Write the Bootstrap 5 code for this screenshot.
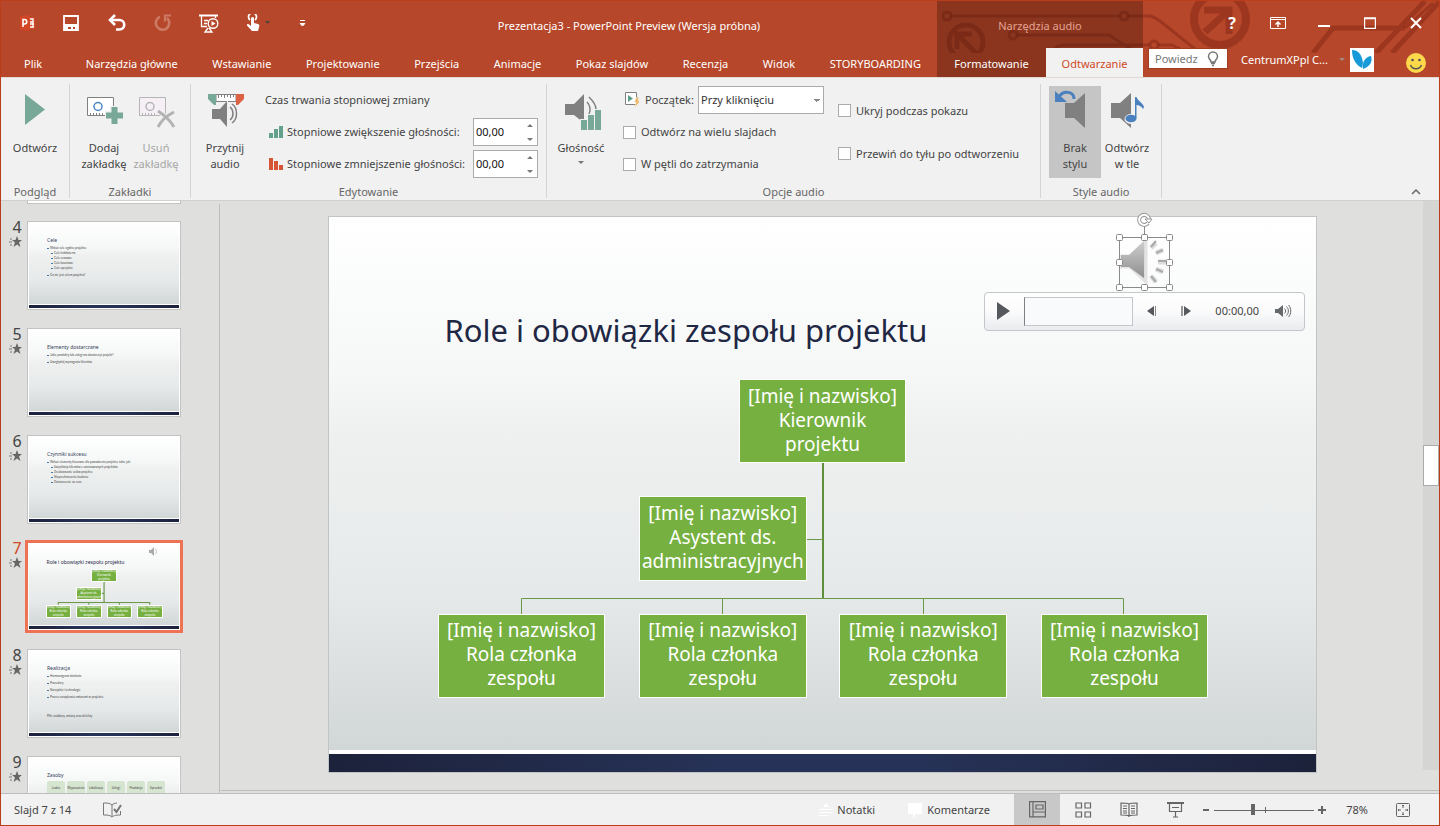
<!DOCTYPE html>
<html lang="pl">
<head>
<meta charset="utf-8">
<meta name="viewport" content="width=device-width, initial-scale=1">
<title>Prezentacja3 - PowerPoint Preview</title>
<link href="https://cdn.jsdelivr.net/npm/bootstrap@5.3.0/dist/css/bootstrap.min.css" rel="stylesheet">
<script src="https://cdn.jsdelivr.net/npm/bootstrap@5.3.0/dist/js/bootstrap.bundle.min.js"></script>
<style>
  body { font-family: "Noto Sans", "Open Sans", sans-serif; font-size: 11px; line-height: 16px; color: #444; }
  button { border: 0; background: transparent; padding: 0; color: inherit; }
  svg { display: block; flex: none; }
  .window { border: 1px solid #bb3d1b; background: #dfdfdd; }

  /* title bar and tabs */
  .app-head { background: #b7472a; color: #fff; }
  .circuit { position: absolute; right: 0; top: 0; }
  .title-row { height: 47px; }
  .title-row .caption, .title-row .doc-name { line-height: 50px; }
  .tab-row { height: 29px; }
  .quick { padding-left: 18px; width: 320px; flex: none; }
  .quick button { width: 46px; height: 44px; flex: none; display: flex; align-items: center; justify-content: center; }
  .quick button:first-child { width: 18px; margin-right: 11px; }
  .quick button:last-child { width: 36px; }
  .quick button.touch { width: 52px; }
  .tabs a, .context a { color: #fff; text-decoration: none; line-height: 31px; }
  .tabs { padding: 0 16px 0 23px; }
  .tabs a:first-child { margin-right: 9px; }
  .context { width: 206px; background: rgba(60, 20, 10, .34); }
  .context .caption { color: #e3a392; }
  .context a { width: 109px; text-align: center; }
  .context a.current { width: 97px; background: #f1f1f1; color: #cf4a27; }
  .head-end { width: 296px; }
  .head-end .title-row button { width: 46px; height: 44px; display: flex; align-items: center; justify-content: center; }
  .tell { width: 80px; height: 21px; flex: none; margin-left: 5px; background: #fff; border: 1px solid #a03c22; }
  .tell input { width: 54px; border: 0; padding: 0 0 0 6px; background: transparent; color: #666; outline: 0; }
  .tell input::placeholder { color: #777; opacity: 1; }
  .account { width: 110px; padding-left: 13px; flex: none; }

  /* ribbon */
  .ribbon { background: #f1f1f1; border-top: 1px solid #e4d8d5; border-bottom: 1px solid #d0d0d0; height: 124px; padding-top: 6px; }
  .rule { width: 1px; background: #d5d5d5; height: 114px; }
  .set-body { height: 96px; }
  .set-name { color: #666; text-align: center; padding-top: 4px; }
  .big { width: 52px; height: 92px; text-align: center; white-space: nowrap; display: flex; flex-direction: column; align-items: center; }
  .big.pressed { background: #c5c5c5; }
  .big:disabled { color: #a6a6a6; }
  .fields { margin-left: 14px; }
  .play-fields { width: 201px; }
  .line-row { height: 32px; display: flex; align-items: center; }
  .opt-row { height: 43px; display: flex; align-items: center; }
  .spin { width: 65px; height: 28px; background: #fff; border: 1px solid #ababab; }
  .spin input { width: 44px; border: 0; padding: 0 0 0 2px; background: transparent; color: #111; outline: 0; }
  .spin path, .start-at { fill: #777; }
  .start-at { width: 126px; height: 28px; border: 1px solid #ababab; border-radius: 0; background-color: #fff; color: #333; padding: 0 2px; font-size: 11px; appearance: none;
    background-image: linear-gradient(45deg, transparent 50%, #888 50%), linear-gradient(-45deg, transparent 50%, #888 50%); background-size: 3px 3px; background-position: right 6px center, right 3px center; background-repeat: no-repeat; }
  .tick { appearance: none; width: 13px; height: 13px; border: 1px solid #ababab; background: #fff; margin: 0 5px 0 0; }

  /* slide list */
  .slides { width: 218px; }
  .slides ol { list-style: none; margin: 0; padding: 0; display: flex; flex-direction: column; gap: 18px; }
  .slides li { display: flex; height: 89px; flex: none; }
  .slides li.above { height: 2px; padding-left: 26px; }
  .no { width: 26px; padding-left: 6px; text-align: center; font-size: 16px; line-height: 12px; }
  .no svg { margin: 2px 0 0 2px; }
  .thumb { width: 154px; height: 89px; padding: 1px; border: 1px solid #c3c3c3; background: #fff; }
  .page { position: relative; overflow: hidden; width: 100%; height: 100%; background: linear-gradient(#fff 0%, #f5f8f7 28%, #eff1f0 38%, #e6e9ea 68%, #d1d6d6 96%, #fff 96%); }
  .page .foot { position: absolute; left: 0; right: 0; bottom: 0; height: 3px; background: linear-gradient(90deg, #1d223b, #263257 40%, #263257 60%, #1d223b); }
  .thumb .foot { outline: 1px solid #fff; }
  .thumb .copy { font: 3px/5px Lato, sans-serif; color: #444; padding: 13px 0 0 18px; white-space: nowrap; }
  .thumb h3 { font: 5px/8px "Noto Sans", sans-serif; margin: 0 0 2px; color: #333b58; }
  .thumb ul { margin: 0; padding: 0 0 0 3px; list-style: none; }
  .thumb ul ul { padding-left: 4px; }
  .thumb li { display: block; height: auto; }
  .thumb li::before { content: ""; float: left; width: 2px; height: 1px; margin: 2px 0 0 -3px; background: #3f77a8; }
  .thumb .wide-gap > li { padding-bottom: 2px; }
  .chosen .no { color: #d24726; }
  .chosen .thumb { border-color: #fff; padding: 0; outline: 3px solid #f07255; outline-offset: -1px; }
  .chosen .page { border: 1px solid #fff; }
  .chips { display: flex; gap: 2px; }
  .chips span { width: 18px; height: 15px; background: #d5e5cf; border-radius: 2px 2px 0 0; text-align: center; line-height: 14px; }

  /* slide editor */
  .split { width: 1px; background: #bdbdbd; margin-top: 3px; }
  .stage { padding: 15px 106px 17px 108px; }
  .slide { border: 1px solid #c0c4c5; }
  .slide .page { aspect-ratio: 987 / 555; height: auto; overflow: visible; }
  .slide .foot { height: 18px; outline: 4px solid #fff; clip-path: inset(-4px 0 0 0); }
  .heading { position: absolute; left: 11.7%; top: 16%; margin: 0; font-size: 31px; line-height: 48px; color: #1f2744; font-weight: 400; white-space: nowrap; }
  .lines { position: absolute; inset: 0; width: 100%; height: 100%; }
  .person { position: absolute; width: 17%; height: 15.2%; background: #76b041; border: 1px solid #fff; color: #fff; text-align: center; font-size: 19px; line-height: 24px; padding-bottom: 3px; display: flex; align-items: center; justify-content: center; white-space: nowrap; }
  .at-lead { left: 41.5%; top: 29.2%; }
  .at-aide { left: 31.4%; top: 50.3%; }
  .at-one { left: 11%; top: 71.5%; }
  .at-two { left: 31.4%; top: 71.5%; }
  .at-three { left: 51.7%; top: 71.5%; }
  .at-four { left: 72.1%; top: 71.5%; }
  .thumb .heading { font-size: 5px; line-height: 8px; }
  .thumb .person { font-size: 3px; line-height: 4px; padding: 0; }
  .thumb .sound { position: absolute; left: 80%; top: 4%; }
  .audio-shape { position: absolute; left: 79.3%; top: -7px; }
  .player { position: absolute; left: 66.4%; top: 13.5%; width: 321px; height: 39px; padding: 0 12px; border: 1px solid #c3c7cb; border-radius: 4px; background: linear-gradient(#fff, #fbfbfc 50%, #e9ebee); display: flex; align-items: center; }
  .seek { width: 109px; height: 29px; margin: 0 14px; background: #f8fafc; border: 1px solid #c3c7cb; border-left-color: #7d8084; }
  .scroll { width: 16px; flex: none; background: #d5d5d3; margin-bottom: 20px; padding-top: 244px; }
  .scroll div { height: 41px; border: 1px solid #ababab; background: #fff; }
  .notes-edge { border-top: 1px solid #bdbdbd; height: 3px; margin-left: 1px; }

  /* status bar */
  .status { background: #f1f1f1; border-top: 1px solid #bdbdbd; height: 32px; padding: 0 13px; }
  .status button { height: 31px; display: flex; align-items: center; justify-content: center; }
  .status .view { width: 46px; }
  .status .on { background: #c8c8c8; }
  .zoomer { appearance: none; width: 100px; height: 14px; margin: 0 4px; background: linear-gradient(#666, #666) 51px 4px / 1px 6px no-repeat, linear-gradient(#666, #666) 0 7px / 100% 1px no-repeat; }
  .zoomer::-webkit-slider-thumb { appearance: none; width: 4px; height: 11px; background: #666; border: 0; border-radius: 0; }
</style>
</head>
<body>
<div class="window d-flex flex-column vh-100 overflow-hidden">

  <header class="app-head position-relative d-flex flex-shrink-0">
    <div class="flex-grow-1">
      <div class="title-row d-flex align-items-start">
        <div class="quick d-flex align-items-center">
          <button aria-label="PowerPoint"><svg width="18" height="18"><path d="M1 2.500 10 1v16L1 15.500z" fill="#d24726"/><path d="M10 3h6v12h-6z" fill="#d24726"/><path d="M11 5h3v3h-3M11 10h4M11 13h4M14 5v8" stroke="#fff" stroke-width="1.300" fill="none"/><path d="M4 13V5.500h1.500a2 2 0 0 1 0 4.500H4" stroke="#fff" stroke-width="1.600" fill="none"/></svg></button>
          <button aria-label="Zapisz"><svg width="16" height="16"><path d="M1 1h14v14H1z" fill="none" stroke="#fff" stroke-width="1.800"/><path d="M1 9h14v6h-3v-3h-2v3H8v-3H5v3H1z" fill="#fff"/></svg></button>
          <button aria-label="Cofnij"><svg width="20" height="18"><path d="M3 6h9.500a4.500 4.500 0 0 1 0 9.500H9" fill="none" stroke="#fff" stroke-width="2.600"/><path d="M8 1 3 6l5 5" fill="none" stroke="#fff" stroke-width="2.600"/></svg></button>
          <button aria-label="Powtórz"><svg width="18" height="18"><path d="M6 2.800a6.700 6.700 0 1 0 7 1.200" fill="none" stroke="#cd7a64" stroke-width="2.600"/><path d="M17 1.500h-6v6" fill="none" stroke="#cd7a64" stroke-width="2.200"/></svg></button>
          <button aria-label="Pokaz od początku"><svg width="20" height="19" fill="none" stroke="#fff"><path d="M0 1.500h19" stroke-width="2"/><path d="M2.500 2v10.500H8M16.500 2v2M5 6.500h4M5 9.500h3M9 14l-3 4h7l-3-4" stroke-width="1.300"/><circle cx="14" cy="9.500" r="4.800" stroke-width="1.400"/><path d="m12.500 7 4 2.500-4 2.500z" fill="#fff" stroke="none"/></svg></button>
          <button class="touch" aria-label="Tryb dotyku"><svg width="24" height="18"><path d="M4 6a4 4 0 1 1 5 0" fill="none" stroke="#fff" stroke-width="1.700"/><path d="M5 4.500a1.500 1.500 0 0 1 3 0V9l4 1c1 .3 1.500 1 1.300 2L12 17H6L1 11.500c-.5-1 .7-2 1.700-1.300L5 12z" fill="#fff"/><path d="M19 7h5l-2.500 3z" fill="#55413d"/></svg></button>
          <button aria-label="Dostosuj"><svg width="7" height="7"><path d="M1 .500h5M1 3.500h5l-2.500 2.500z" fill="#fff" stroke="#fff" stroke-width="1"/></svg></button>
        </div>
        <div class="doc-name flex-grow-1 text-center">Prezentacja3 - PowerPoint Preview (Wersja próbna)</div>
      </div>
      <nav class="tabs tab-row d-flex justify-content-between">
        <a href="#">Plik</a><a href="#">Narzędzia główne</a><a href="#">Wstawianie</a><a href="#">Projektowanie</a><a href="#">Przejścia</a><a href="#">Animacje</a><a href="#">Pokaz slajdów</a><a href="#">Recenzja</a><a href="#">Widok</a><a href="#">STORYBOARDING</a>
      </nav>
    </div>

    <svg class="circuit" width="502" height="52" fill="none" stroke="#6b1a0a" stroke-opacity=".36" stroke-width="3">
      <circle cx="10" cy="15" r="4"/><path d="M14 15h168M190 15h21c5 0 8 2 12 5l35 28"/><circle cx="187" cy="15" r="4"/>
      <circle cx="76" cy="34" r="4"/><path d="M80 34h92l22 14M118 47c3-2 6-3 10-3h84M221 44h14l10 5"/><circle cx="217" cy="44" r="4"/>
      <circle cx="29" cy="41" r="17" stroke-width="5"/><path d="M20 48V33h15M21 34l18 18" stroke-width="5"/>
      <circle cx="283" cy="18" r="26" stroke-width="8"/><path d="M267 9h25v24M290 11l-22 20" stroke-width="7"/>
      <path d="M376 52l20-25h72M439 52l49-52M455 52l48-52" stroke-width="5"/><path d="M468 27l28-25"/>
    </svg>

    <div class="context position-relative">
      <div class="title-row text-center"><div class="caption">Narzędzia audio</div></div>
      <nav class="tab-row d-flex"><a href="#">Formatowanie</a><a href="#" class="current" aria-current="page">Odtwarzanie</a></nav>
    </div>

    <div class="head-end position-relative">
      <div class="title-row d-flex justify-content-end align-items-start">
        <button aria-label="Pomoc" class="fw-bold fs-6">?</button>
        <button aria-label="Opcje wyświetlania wstążki"><svg width="16" height="12" fill="none" stroke="#fff"><path d="M.5.500h15v11H.5zM1 2.500h14"/><path d="M8 10V5M5.500 7.500 8 5l2.500 2.500" stroke-width="1.500"/></svg></button>
        <button aria-label="Minimalizuj"><svg width="12" height="12"><path d="M0 8h12v2H0z" fill="#fff"/></svg></button>
        <button aria-label="Maksymalizuj"><svg width="12" height="12"><path d="M.5 1h11v10.500H.5zM0 1.500h12" fill="none" stroke="#fff" stroke-width="1.400"/></svg></button>
        <button aria-label="Zamknij"><svg width="12" height="12"><path d="m1 1 10 10M11 1 1 11" stroke="#fff" stroke-width="2"/></svg></button>
      </div>
      <div class="tab-row d-flex align-items-start">
        <label class="tell d-flex align-items-center"><input type="text" placeholder="Powiedz" aria-label="Powiedz"><svg width="12" height="16" class="ms-1" fill="none" stroke="#777" stroke-width="1.500"><path d="M4 11c0-2-2.500-3-2.500-5.500a4.500 4.500 0 0 1 9 0C10.500 8 8 9 8 11zM4 12.500h4M5 14.500h2"/></svg></label>
        <span class="account pt-1">CentrumXPpl C...</span>
        <svg class="mt-2" width="8" height="6"><path d="M1 2h6L4 5z" fill="#a3897f"/></svg>
        <svg class="ms-1" width="24" height="24"><path d="M0 0h24v24H0z" fill="#fff"/><path d="M2 2c6 0 10 4 11 13l-1 5C6 17 2 11 2 2zM13 21c-1-7 2-12 8-13 2 5-1 11-8 13z" fill="#169bd8"/></svg>
        <svg class="ms-auto me-2 mt-1" width="32" height="22"><circle cx="17" cy="11" r="10" fill="#fcd84a"/><circle cx="13.500" cy="8" r="1.300" fill="#555"/><circle cx="20.500" cy="8" r="1.300" fill="#555"/><path d="M11.500 13c2 5 9 5 11 0" fill="none" stroke="#555" stroke-width="1.500"/></svg>
      </div>
    </div>
  </header>

  <section class="ribbon d-flex flex-shrink-0" aria-label="Odtwarzanie">
    <div style="width:68px">
      <div class="set-body d-flex align-items-center justify-content-center">
        <button class="big"><svg width="52" height="54"><path d="M16 8v31l20-15.500z" fill="#77a898"/></svg><span>Odtwórz</span></button>
      </div>
      <div class="set-name">Podgląd</div>
    </div>
    <div class="rule"></div>
    <div style="width:120px">
      <div class="set-body d-flex align-items-center justify-content-center">
        <button class="big"><svg width="52" height="54"><path d="M9.500 11.500h26v18h-26z" fill="#fff" stroke="#808080"/><path d="M12.500 27v2M15.500 27v2M18.500 27v2M21.500 27v2M24.500 27v2" stroke="#808080"/><circle cx="20" cy="20.500" r="4" fill="none" stroke="#4a86c5" stroke-width="1.500"/><path d="M36.500 20v19M27 29.500h19" stroke="#f1f1f1" stroke-width="9"/><path d="M36.500 21v17M28 29.500h17" stroke="#77a898" stroke-width="6"/></svg><span>Dodaj<br>zakładkę</span></button>
        <button class="big" disabled><svg width="52" height="54"><path d="M9.500 11.500h26v18h-26z" fill="#f6f0f6" stroke="#b5b5b5"/><path d="M12.500 27v2M15.500 27v2M18.500 27v2M21.500 27v2M24.500 27v2" stroke="#b5b5b5"/><circle cx="20" cy="20.500" r="4" fill="none" stroke="#b5b5b5" stroke-width="1.500"/><path d="M28 25c6 4 12 9 16 16M43 26c-7 4-12 9-15 15" fill="none" stroke="#f1f1f1" stroke-width="5"/><path d="M28 25c6 4 12 9 16 16M44 26c-8 4-13 9-16 15" fill="none" stroke="#b2b2b2" stroke-width="2.800"/></svg><span>Usuń<br>zakładkę</span></button>
      </div>
      <div class="set-name">Zakładki</div>
    </div>
    <div class="rule"></div>
    <div style="width:355px">
      <div class="set-body d-flex align-items-center ps-2">
        <button class="big"><svg width="52" height="54"><path d="M17 8.500h20v7H17z" fill="#fff" stroke="#808080"/><path d="M19.500 9v3M22.500 9v2M25.500 9v3M28.500 9v2M31.500 9v3M34.500 9v2" stroke="#808080"/><path d="M9 8h8v11h-2l-6-6z" fill="#77a898"/><path d="M45 8h-8v11h2l6-6z" fill="#dd6243"/><path d="M12 22h9l8-8v29l-8-8h-9z" fill="#f1f1f1"/><path d="M13 23h8l7-8v26l-7-8h-8z" fill="#808080"/><path d="M31 21c4 3 4 10 0 13M33 18c6 4 6 15 0 19" fill="none" stroke="#808080" stroke-width="1.500"/></svg><span>Przytnij<br>audio</span></button>
        <div class="fields flex-grow-1 pe-2">
          <div class="line-row">Czas trwania stopniowej zmiany</div>
          <div class="line-row"><svg class="mx-1" width="14" height="14"><path d="M0 8h4v5H0zM5 4h4v9H5zM10 1h4v12h-4z" fill="#62a28d"/></svg><label for="fin">Stopniowe zwiększenie głośności:</label>
            <div class="spin d-flex align-items-center ms-auto"><input id="fin" value="00,00"><svg width="17" height="22"><path d="M9 6h6l-3-3zM9 17h6l-3 3z"/></svg></div></div>
          <div class="line-row"><svg class="mx-1" width="14" height="14"><path d="M0 1h4v12H0zM5 4h4v9H5zM10 8h4v5h-4z" fill="#d75534"/></svg><label for="fout">Stopniowe zmniejszenie głośności:</label>
            <div class="spin d-flex align-items-center ms-auto"><input id="fout" value="00,00"><svg width="17" height="22"><path d="M9 6h6l-3-3zM9 17h6l-3 3z"/></svg></div></div>
        </div>
      </div>
      <div class="set-name">Edytowanie</div>
    </div>
    <div class="rule"></div>
    <div style="width:493px">
      <div class="set-body d-flex align-items-center ps-2">
        <button class="big"><svg width="52" height="54"><path d="M10 18h9l10-10v29l-10-8h-9z" fill="#808080"/><path d="M32 16c3 3 4 8 2 12M34 11c4 4 7 8 7 12" fill="none" stroke="#808080" stroke-width="1.500"/><path d="M25 45V33h7v-5h7v-5h8v22z" fill="#f1f1f1"/><path d="M26 34h6v10h-6zM33 29h6v15h-6zM40 24h6v20h-6z" fill="#77a898"/></svg><span>Głośność</span><svg class="mt-1" width="8" height="6"><path d="M1 1h6L4 4z" fill="#777"/></svg></button>
        <div class="fields play-fields ms-3">
          <div class="line-row"><svg class="me-1" width="18" height="16"><path d="M2.500.500h11v12h-11z" fill="#fff" stroke="#808080"/><path d="M5 3v7l5-3.500z" fill="#5fa08a"/><path d="m14 5-3 5h2l-1 6 5-7h-2l1-4z" fill="#f0b65c" stroke="#f1f1f1" stroke-width=".6"/></svg><label for="at">Początek:</label>
            <select id="at" class="start-at ms-auto"><option>Przy kliknięciu</option></select></div>
          <div class="line-row"><input class="tick" type="checkbox" id="c1"><label for="c1">Odtwórz na wielu slajdach</label></div>
          <div class="line-row"><input class="tick" type="checkbox" id="c2"><label for="c2">W pętli do zatrzymania</label></div>
        </div>
        <div class="fields">
          <div class="opt-row"><input class="tick" type="checkbox" id="c3"><label for="c3">Ukryj podczas pokazu</label></div>
          <div class="opt-row"><input class="tick" type="checkbox" id="c4"><label for="c4">Przewiń do tyłu po odtworzeniu</label></div>
        </div>
      </div>
      <div class="set-name">Opcje audio</div>
    </div>
    <div class="rule"></div>
    <div style="width:120px">
      <div class="set-body d-flex align-items-center justify-content-center">
        <button class="big pressed" aria-pressed="true"><svg width="52" height="54"><path d="M16 17h9L36 7v35L25 32h-9z" fill="#808080"/><path d="M25 13c0-8-11-9-15-2" fill="none" stroke="#4a80bd" stroke-width="3"/><path d="M6 5v11h12z" fill="#4a80bd"/></svg><span>Brak<br>stylu</span></button>
        <button class="big"><svg width="52" height="54"><path d="M10 17h9L30 7v35L19 32h-9z" fill="#808080"/><ellipse cx="30" cy="33" rx="6.500" ry="5" fill="#f1f1f1"/><path d="M32.500 9v22" stroke="#f1f1f1" stroke-width="3"/><ellipse cx="30" cy="32.500" rx="5.500" ry="3.800" fill="#4a80bd"/><path d="M34 11h1.500c1 4 6 5 7.500 10l-1 2c-2-3-4-4-6.500-4v13H34z" fill="#4a80bd"/></svg><span>Odtwórz<br>w tle</span></button>
      </div>
      <div class="set-name">Style audio</div>
    </div>
    <div class="rule"></div>
    <button class="ms-auto align-self-end pb-1 pe-3" aria-label="Zwiń wstążkę"><svg width="14" height="8"><path d="m3 6 4-4 4 4" fill="none" stroke="#666" stroke-width="1.500"/></svg></button>
  </section>

  <main class="d-flex flex-grow-1 overflow-hidden">
    <aside class="slides overflow-hidden flex-shrink-0">
      <ol id="list">
        <li class="above"><div class="thumb h-100 border-top-0"></div></li>
        <li data-n="4"><div class="thumb"><div class="page"><div class="copy"><h3>Cele</h3><ul class="wide-gap"><li>Wskaż cele ogólne projektu<ul><li>Cele krótkoterm.</li><li>Cele czasowe</li><li>Cele kosztowe</li><li>Cele specjalne</li></ul></li><li>Co nie jest celem projektu?</li></ul></div><div class="foot"></div></div></div></li>
        <li data-n="5"><div class="thumb"><div class="page"><div class="copy"><h3>Elementy dostarczane</h3><ul class="wide-gap"><li>Jakie produkty lub usługi ma dostarczyć projekt?</li><li>Uwzględnij wymagania klientów</li></ul></div><div class="foot"></div></div></div></li>
        <li data-n="6"><div class="thumb"><div class="page"><div class="copy"><h3>Czynniki sukcesu</h3><ul><li>Wskaż elementy kluczowe dla powodzenia projektu, takie jak:<ul><li>Satysfakcja klientów z zastosowanych projektów</li><li>Zrealizowanie celów projektu</li><li>Nieprzekroczenie budżetu</li><li>Dostarczenie na czas</li></ul></li></ul></div><div class="foot"></div></div></div></li>
        <li data-n="7" class="chosen"><div class="thumb"><div class="page" id="mini"><svg class="sound" width="9" height="9"><path d="M0 3h2l3-3v9L2 6H0z" fill="#aaa"/><path d="M6 2c2 1 2 4 0 5" fill="none" stroke="#bbb"/></svg></div></div></li>
        <li data-n="8"><div class="thumb"><div class="page"><div class="copy"><h3>Realizacja</h3><ul class="wide-gap"><li>Harmonogram działania</li><li>Procedury</li><li>Narzędzia i technologie</li><li>Proces zarządzania zmianami w projekcie</li></ul><div class="pt-2 mt-1">Plik: szablony, zmiany oraz defekty</div></div><div class="foot"></div></div></div></li>
        <li data-n="9"><div class="thumb"><div class="page"><div class="copy"><h3>Zasoby</h3><div class="chips"><span>Ludzie</span><span>Wyposażenie</span><span>Lokalizacja</span><span>Usługi</span><span>Produkcja</span><span>Sprzedaż</span></div></div><div class="foot"></div></div></div></li>
      </ol>
    </aside>
    <div class="split"></div>
    <div class="flex-grow-1 d-flex flex-column">
      <div class="d-flex flex-grow-1">
        <div class="stage flex-grow-1">
          <div class="slide">
            <div class="page" id="full">
              <h1 class="heading">Role i obowiązki zespołu projektu</h1>
              <svg class="lines" viewBox="0 0 987 555" preserveAspectRatio="none" fill="none" stroke="#6a9a49"><path d="M494 246v136" stroke-width="2" stroke="#5f8f3c"/><path d="M477 322.500h17M192.500 397v-15.500h602V397M393.500 397v-15M594.500 397v-15"/></svg>
              <div class="person at-lead">[Imię i nazwisko]<br>Kierownik<br>projektu</div>
              <div class="person at-aide">[Imię i nazwisko]<br>Asystent ds.<br>administracyjnych</div>
              <div class="person at-one">[Imię i nazwisko]<br>Rola członka<br>zespołu</div>
              <div class="person at-two">[Imię i nazwisko]<br>Rola członka<br>zespołu</div>
              <div class="person at-three">[Imię i nazwisko]<br>Rola członka<br>zespołu</div>
              <div class="person at-four">[Imię i nazwisko]<br>Rola członka<br>zespołu</div>
              <div class="foot"></div>
              <svg class="audio-shape" width="66" height="84">
                <defs><linearGradient id="g" x2="0" y2="1"><stop stop-color="#cfcfcf"/><stop offset="1" stop-color="#8e8e8e"/></linearGradient></defs>
                <path d="M9 46h9l16-15v41L18 57H9z" fill="#d6d6d6" stroke="#e2e2e2" stroke-width="3"/>
                <path d="M9 45h8l15-14v37L17 57H9z" fill="url(#g)"/>
                <path d="m39 38 5-5M44 43l7-3M46 52h8M44 59l7 3M39 66l5 6" stroke="#ddd" stroke-width="5"/><path d="m39 37 5-6M44 43l7-3M46 51h8M44 59l7 3M39 66l5 6" stroke="#aaa" stroke-width="2"/>
                <path d="M7.500 27.500h50v50h-50zM32.500 15v12" fill="none" stroke="#8a8a8a"/>
                <g fill="#fff" stroke="#8a8a8a"><rect x="4.500" y="24.500" width="6" height="6" rx="1"/><rect x="29.500" y="24.500" width="6" height="6" rx="1"/><rect x="54.500" y="24.500" width="6" height="6" rx="1"/><rect x="4.500" y="49.500" width="6" height="6" rx="1"/><rect x="54.500" y="49.500" width="6" height="6" rx="1"/><rect x="4.500" y="74.500" width="6" height="6" rx="1"/><rect x="29.500" y="74.500" width="6" height="6" rx="1"/><rect x="54.500" y="74.500" width="6" height="6" rx="1"/></g>
                <path d="M36 13a5 5 0 1 1 1-4" fill="none" stroke="#999" stroke-width="4"/><path d="M36 13a5 5 0 1 1 1-4" fill="none" stroke="#fff" stroke-width="2"/><path d="M33 9h7l-3 4z" fill="#fff" stroke="#999"/>
              </svg>
              <div class="player">
                <button aria-label="Odtwórz"><svg width="13" height="18"><path d="M0 0v18l13-9z" fill="#55585c"/></svg></button>
                <div class="seek"></div>
                <button aria-label="Do tyłu"><svg width="10" height="10"><path d="M7 0v10L0 5z" fill="#55585c"/><path d="M8.500 0v10" stroke="#888"/></svg></button>
                <button aria-label="Do przodu" class="ms-4"><svg width="10" height="10"><path d="M3 0v10l7-5z" fill="#55585c"/><path d="M1 0v10" stroke="#777" stroke-width="1.500"/></svg></button>
                <span class="ms-4">00:00,00</span>
                <button aria-label="Wycisz" class="ms-auto"><svg width="17" height="14"><path d="M0 5h3l5-4v12L3 9H0z" fill="#66696c"/><path d="M9.500 4.500c1.500 1.500 1.500 3.500 0 5M11.500 2.500c2.500 2.500 2.500 6.500 0 9M13.500 1c3 3 3 9 0 12" fill="none" stroke="#66696c"/></svg></button>
              </div>
            </div>
          </div>
        </div>
        <div class="scroll"><div></div></div>
      </div>
      <div class="notes-edge"></div>
    </div>
  </main>

  <footer class="status d-flex align-items-center flex-shrink-0">
    <span>Slajd 7 z 14</span>
    <button class="ms-4 ps-2" aria-label="Sprawdzanie pisowni"><svg width="19" height="16" fill="none" stroke="#777"><path d="M9 3C7 1 4 1 .5 1v12C4 13 7 13 9 15c1-1 3-2 8.500-2V9M9 3v12M9 3c1-1 3-2 5-2"/><path d="m11 7 2.500 3L18 3" stroke-width="2"/></svg></button>
    <div class="ms-auto d-flex align-items-center">
      <button><svg class="me-1" width="14" height="14"><path d="m7 0 3 4H4zM0 6h14v1H0zM0 9h14v1H0zM0 12h9v1H0z" fill="#fff"/></svg>Notatki</button>
      <button class="mx-4 ps-2"><svg class="me-1" width="16" height="16"><path d="M1 1h14v11H9l-3 4v-4H1z" fill="#fff"/></svg>Komentarze</button>
      <button class="view on" aria-label="Normalny"><svg width="17" height="17" fill="none" stroke="#666" stroke-width="1.200"><path d="M.6.600h15.800v15.300H.6zM4 1v15M4 11h12M7 4h7v4H7z"/></svg></button>
      <button class="view" aria-label="Sortowanie slajdów"><svg width="17" height="16" fill="none" stroke="#666" stroke-width="1.200"><path d="M1 1h5.500v5H1zM10 1h5.500v5H10zM1 10h5.500v5H1zM10 10h5.500v5H10z"/></svg></button>
      <button class="view" aria-label="Widok do czytania"><svg width="18" height="16" fill="none" stroke="#666" stroke-width="1.200"><path d="M9 2C7 1 4 1 1 1v12c3 0 6 0 8 1 2-1 5-1 8-1V1c-3 0-6 0-8 1v13M3 4h4M3 6.500h4M3 9h4M3 11h4M11 4h4M11 6.500h4M11 9h4M11 11h4"/></svg></button>
      <button class="view" aria-label="Pokaz slajdów"><svg width="17" height="16" fill="none" stroke="#666" stroke-width="1.200"><path d="M0 1h17" stroke-width="2"/><path d="M2.500 2v7.500h12V2M5 5.500h7M8.500 10v5M6 15h5"/></svg></button>
      <button class="ms-1" aria-label="Pomniejsz"><svg width="8" height="8"><path d="M1 4h6" stroke="#666" stroke-width="2"/></svg></button>
      <input class="zoomer" type="range" min="0" max="100" value="39" aria-label="Powiększenie">
      <button aria-label="Powiększ" class="me-2"><svg width="8" height="8"><path d="M0 4h8M4 0v8" stroke="#666" stroke-width="2"/></svg></button>
      <button class="view">78%</button>
      <button class="view" aria-label="Dopasuj"><svg width="14" height="14" fill="none" stroke="#666"><rect x=".5" y=".5" width="13" height="13" rx="1"/><path d="M7 2v3M7 9v3M2 7h3M9 7h3M6 3l1-1 1 1M6 11l1 1 1-1M3 6 2 7l1 1M11 6l1 1-1 1"/></svg></button>
    </div>
  </footer>
</div>
<script>
  // slide numbers with the animation star
  document.querySelectorAll('#list > li[data-n]').forEach(li => {
    li.insertAdjacentHTML('afterbegin', '<div class="no">' + li.dataset.n + '<svg width="14" height="13"><path d="m8 1 1.500 4H13l-3 2.500L11.500 12 8 9.500 4.500 12 6 7.500 3 5h3.500z" fill="#666"/><path d="M1 4h2M0 7h3M1 10h2" stroke="#777"/></svg></div>');
  });
  // the selected thumbnail shows the open slide
  const mini = document.getElementById('mini');
  document.querySelectorAll('#full > .lines, #full > .person, #full > .foot').forEach(n => {
    const copy = n.cloneNode(true);
    if (copy.matches('.person')) copy.innerHTML = '<div>' + copy.innerHTML + '</div>';
    mini.append(copy);
  });
  mini.querySelectorAll('.lines path').forEach(p => p.setAttribute('stroke-width', '7'));
  mini.insertAdjacentHTML('afterbegin', '<div class="heading">Role i obowiązki zespołu projektu</div>');
</script>
</body>
</html>
